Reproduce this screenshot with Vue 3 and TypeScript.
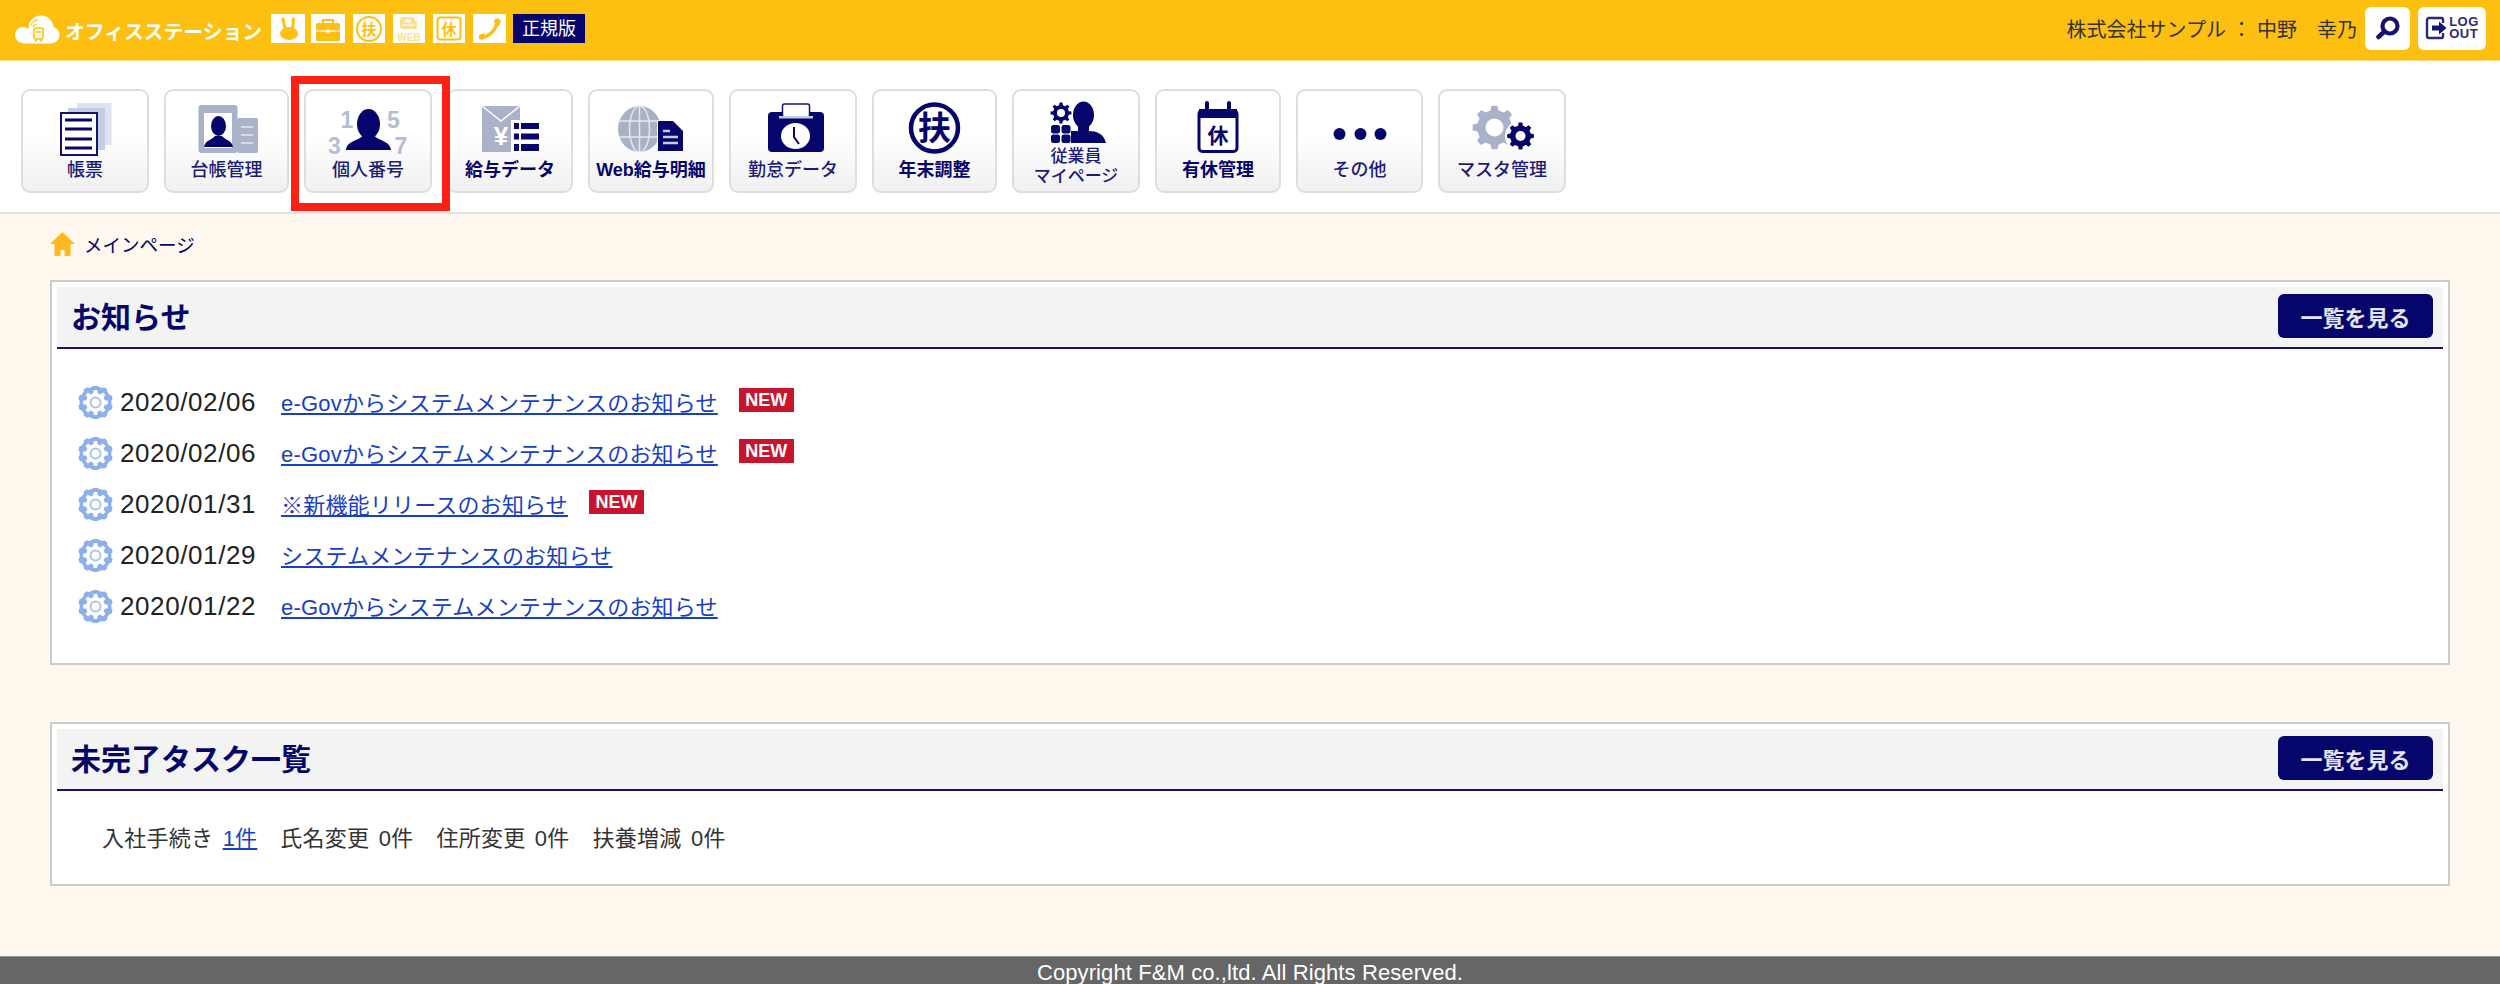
<template>
  <div class="page">
    <!-- 上部バー -->
    <header class="topbar">
      <div class="brand">
        <svg class="logo" width="46" height="30" viewBox="0 0 46 30">
          <circle cx="9" cy="20" r="8" fill="#fff" />
          <circle cx="27" cy="13" r="12.5" fill="#fff" />
          <circle cx="37" cy="20" r="8.5" fill="#fff" />
          <rect x="9" y="18" width="28" height="10.5" fill="#fff" />
          <rect x="20" y="13" width="9" height="11" rx="2" fill="none" stroke="#fec010" stroke-width="1.6" />
          <path d="M21 27l2-3M28 27l-2-3M22 17h5" stroke="#fec010" stroke-width="1.4" fill="none" />
          <path d="M17 10a9 9 0 0 1 7-5M19 12a5 5 0 0 1 4-3" stroke="#fec010" stroke-width="1.2" fill="none" />
        </svg>
        <span class="brand-name">オフィスステーション</span>
      </div>
      <div class="app-icons">
        <span class="app-icon w34">
          <svg width="34" height="29" viewBox="0 0 34 29">
            <ellipse cx="18" cy="19.5" rx="9" ry="6.5" fill="#fec010" />
            <path d="M14 15L12 5M21.5 15L22.5 5" stroke="#fec010" stroke-width="3" stroke-linecap="round" />
          </svg>
        </span>
        <span class="app-icon w34">
          <svg width="34" height="29" viewBox="0 0 34 29">
            <path d="M12 10V6h10v4" fill="none" stroke="#fec010" stroke-width="2" />
            <rect x="5" y="9" width="24" height="18" rx="1.5" fill="#fec010" />
            <path d="M5 17h24" stroke="#fff" stroke-width="1.2" />
            <rect x="15" y="15.5" width="4" height="3" fill="#fff" />
          </svg>
        </span>
        <span class="app-icon w32">
          <svg width="32" height="29" viewBox="0 0 32 29">
            <circle cx="16" cy="15" r="12" fill="none" stroke="#fec010" stroke-width="2" />
            <text x="16" y="20.5" class="glyph" font-size="15" fill="#fec010">扶</text>
          </svg>
        </span>
        <span class="app-icon w32">
          <svg width="32" height="29" viewBox="0 0 32 29">
            <path d="M9 3h10a3 3 0 0 1 3 3v1h2v8H10a3 3 0 0 1-3-3V7a3 3 0 0 1 2-4z" fill="#fddf92" />
            <rect x="12" y="5.5" width="6" height="3" rx="1" fill="#fff" />
            <path d="M9 11h13" stroke="#fff" stroke-width="1.2" />
            <text x="16" y="26.5" class="glyph latin" font-size="10" fill="#fddf92">WEB</text>
          </svg>
        </span>
        <span class="app-icon w32">
          <svg width="32" height="29" viewBox="0 0 32 29">
            <rect x="4.5" y="3.5" width="23" height="22" rx="3" fill="none" stroke="#fec010" stroke-width="2" />
            <text x="16" y="20.5" class="glyph" font-size="15" fill="#fec010">休</text>
          </svg>
        </span>
        <span class="app-icon w33">
          <svg width="33" height="29" viewBox="0 0 33 29">
            <path d="M24 8C23 16 16 23 9 23" fill="none" stroke="#fec010" stroke-width="3.5" />
            <path d="M21 6l4-2 3 3-2 5-4-1zM6 21l5-2 2 4-4 3-3-1z" fill="#fec010" />
          </svg>
        </span>
        <span class="edition">正規版</span>
      </div>
      <div class="user-area">
        <span class="user-name">株式会社サンプル ： 中野　幸乃</span>
        <button class="tool-btn search-btn" type="button">
          <svg width="28" height="24" viewBox="0 0 28 24">
            <circle cx="16" cy="10" r="7.5" fill="none" stroke="#14146e" stroke-width="4.2" />
            <path d="M10.5 15.5L4.5 21" stroke="#14146e" stroke-width="4.5" stroke-linecap="round" />
          </svg>
        </button>
        <button class="tool-btn logout-btn" type="button">
          <svg width="22" height="24" viewBox="0 0 22 24">
            <path d="M18 7V3.5A1.5 1.5 0 0 0 16.5 2H4a2 2 0 0 0-2 2v16a2 2 0 0 0 2 2h12.5a1.5 1.5 0 0 0 1.5-1.5V17" fill="none" stroke="#2a2a78" stroke-width="2.4" />
            <path d="M7 9.5h7V5.5l7.5 6.5-7.5 6.5v-4H7z" fill="#14146e" />
          </svg>
          <span class="logout-text">LOG<br />OUT</span>
        </button>
      </div>
    </header>

    <!-- メニュータブ -->
    <nav class="tabs">
      <a
        v-for="tab in tabs"
        :key="tab.id"
        :class="['tab', { 'tab-two': tab.two, 'tab-active': tab.id === 'number' }]"
        :style="{ width: tab.width + 'px' }"
      >
        <svg class="tab-icon" :width="70" :height="tab.two ? 46 : 56" :viewBox="tab.two ? '0 0 70 46' : '0 0 70 56'">
          <template v-if="tab.id === 'forms'">
            <rect x="27" y="3" width="34.5" height="42" fill="#dfe3ef" />
            <rect x="18" y="8" width="37" height="42" fill="#c5cde2" />
            <rect x="11" y="13" width="36" height="42" fill="#fff" stroke="#14146e" stroke-width="2" />
            <path d="M15 20h27M15 29h27M15 39h27M15 48h27" stroke="#05056b" stroke-width="3" />
          </template>
          <template v-else-if="tab.id === 'ledger'">
            <rect x="6.5" y="5" width="39" height="48" rx="3" fill="#a9b2c8" />
            <rect x="45" y="18" width="21" height="35" rx="2" fill="#a9b2c8" />
            <rect x="12" y="13" width="28" height="35" fill="#fff" />
            <ellipse cx="26.5" cy="26" rx="7.5" ry="10" fill="#05056b" />
            <path d="M12 47c1-7 8-7 11-11h7c3 4 10 4 11 11z" fill="#05056b" />
            <path d="M49 27h12M49 35h12M49 43h12" stroke="#d6dbe7" stroke-width="2" />
          </template>
          <template v-else-if="tab.id === 'number'">
            <text x="14" y="28" class="digit" font-size="23">1</text>
            <text x="60.5" y="28" class="digit" font-size="23">5</text>
            <text x="1.5" y="54" class="digit" font-size="23">3</text>
            <text x="68" y="54" class="digit" font-size="23">7</text>
            <ellipse cx="35.5" cy="24" rx="11.5" ry="15" fill="#05056b" />
            <path d="M13 50c1-10 14-9 17-15h11c3 6 16 5 17 15z" fill="#05056b" />
          </template>
          <template v-else-if="tab.id === 'salary'">
            <rect x="7" y="6" width="38" height="46" fill="#a9b2c8" />
            <path d="M7 6l19 15L45 6" fill="none" stroke="#fff" stroke-width="1.5" />
            <text x="26" y="45" class="glyph latin" font-size="26" fill="#fff">¥</text>
            <rect x="36" y="20" width="29" height="33" fill="#fff" />
            <path d="M39 23h5v6h-5zM39 33.5h5v6h-5zM39 44h5v7h-5z" fill="#05056b" />
            <path d="M46 23h18v6H46zM46 33.5h18v6H46zM46 44h18v7H46z" fill="#05056b" />
          </template>
          <template v-else-if="tab.id === 'web'">
            <ellipse cx="23.5" cy="29" rx="21.5" ry="23" fill="#a9b2c4" />
            <ellipse cx="23.5" cy="29" rx="10" ry="23" fill="none" stroke="#e4e7ee" stroke-width="1.5" />
            <path d="M23.5 6v46M3 21h41M3 37h41" stroke="#e4e7ee" stroke-width="1.5" />
            <path d="M41 20h16l11 11v21H41z" fill="#fff" />
            <path d="M42 21h15l10 10v20H42z" fill="#05056b" />
            <path d="M47 31h7M47 37h15M47 43h15" stroke="#c8cce0" stroke-width="2.5" />
          </template>
          <template v-else-if="tab.id === 'attendance'">
            <rect x="10" y="12" width="56" height="40" rx="4" fill="#05056b" />
            <rect x="24.5" y="4" width="27" height="13" rx="2" fill="#fff" stroke="#14146e" stroke-width="1.5" />
            <rect x="21" y="16" width="34" height="2.5" fill="#c5cbe0" />
            <ellipse cx="37.5" cy="36" rx="14.5" ry="13" fill="#fff" />
            <path d="M36 27v10l5 7" fill="none" stroke="#05056b" stroke-width="2" />
          </template>
          <template v-else-if="tab.id === 'adjust'">
            <circle cx="34.5" cy="28" r="23.5" fill="none" stroke="#05056b" stroke-width="4.5" />
            <text x="34.5" y="40" class="glyph" font-size="33" fill="#05056b">扶</text>
          </template>
          <template v-else-if="tab.id === 'mypage'">
            <path :d="gearPath(20, 13, 10.5, 8, 8)" fill="#05056b" />
            <circle cx="20" cy="13" r="4" fill="#fff" />
            <rect x="10" y="25" width="9" height="8.5" rx="2.5" fill="#05056b" />
            <rect x="20.5" y="25" width="9" height="8.5" rx="2.5" fill="#05056b" />
            <rect x="10" y="34.5" width="9" height="8.5" rx="2.5" fill="#05056b" />
            <rect x="20.5" y="34.5" width="9" height="8.5" rx="2.5" fill="#05056b" />
            <ellipse cx="42.5" cy="15" rx="10.5" ry="13.5" fill="#05056b" />
            <path d="M30 43V31h7l0-5h11v5c8 0 15 3 17 12z" fill="#05056b" />
          </template>
          <template v-else-if="tab.id === 'leave'">
            <rect x="16" y="10.5" width="38" height="41" rx="3.5" fill="#fff" stroke="#05056b" stroke-width="3" />
            <path d="M16 9h38v9H16z" fill="#05056b" />
            <path d="M24 3v7M46 3v7" stroke="#05056b" stroke-width="4" stroke-linecap="round" />
            <text x="35" y="43" class="glyph" font-size="21" fill="#05056b">休</text>
          </template>
          <template v-else-if="tab.id === 'other'">
            <circle cx="14.5" cy="34" r="6" fill="#05056b" />
            <circle cx="35.5" cy="34" r="6" fill="#05056b" />
            <circle cx="55.5" cy="34" r="6" fill="#05056b" />
          </template>
          <template v-else-if="tab.id === 'master'">
            <path :d="gearPath(27.5, 27.5, 22, 17.5, 8)" fill="#a9b2c8" />
            <circle cx="27.5" cy="27.5" r="9" fill="#fff" />
            <circle cx="53.5" cy="36" r="15.5" fill="#fff" />
            <path :d="gearPath(53.5, 36, 13.5, 10.5, 8)" fill="#05056b" />
            <circle cx="53.5" cy="36" r="5" fill="#fff" />
          </template>
        </svg>
        <span class="tab-label" :class="{ strong: tab.strong }">
          <template v-for="(line, i) in tab.label" :key="i"><br v-if="i > 0" />{{ line }}</template>
        </span>
        <span v-if="tab.id === 'number'" class="tab-highlight"></span>
      </a>
    </nav>

    <main class="main">
      <div class="breadcrumb">
        <svg width="25" height="24" viewBox="0 0 25 24">
          <path d="M12.5 0L25 12h-4.500v12h-6v-6h-4v6h-6V12H0z" fill="#fdb91f" />
        </svg>
        <span>メインページ</span>
      </div>

      <!-- お知らせ -->
      <section class="panel">
        <div class="panel-head">
          <h2>お知らせ</h2>
          <button class="more-btn" type="button">一覧を見る</button>
        </div>
        <ul class="news">
          <li v-for="(item, i) in news" :key="i" class="news-row">
            <svg class="news-icon" width="35" height="33" viewBox="0 0 35 33">
              <path :d="gearPath(17.5, 16.5, 17.5, 16, 10)" fill="#8db0ec" />
              <path :d="gearPath(17.5, 16.5, 12.5, 9.5, 8)" fill="#fff" />
              <circle cx="17.5" cy="16.5" r="5" fill="none" stroke="#a9c3f0" stroke-width="2" />
            </svg>
            <span class="news-date">{{ item.date }}</span>
            <a class="link news-link">{{ item.title }}</a>
            <span v-if="item.isNew" class="new-badge">NEW</span>
          </li>
        </ul>
      </section>

      <!-- 未完了タスク -->
      <section class="panel panel-task">
        <div class="panel-head">
          <h2>未完了タスク一覧</h2>
          <button class="more-btn" type="button">一覧を見る</button>
        </div>
        <div class="tasks">
          <span v-for="task in tasks" :key="task.name" class="task">
            {{ task.name }} <a v-if="task.count > 0" class="link">{{ task.count }}件</a><template v-else>{{ task.count }}件</template>
          </span>
        </div>
      </section>
    </main>

    <footer class="footer">Copyright F&amp;M co.,ltd. All Rights Reserved.</footer>
  </div>
</template>

<script setup lang="ts">
interface Tab {
  id: string
  label: string[]
  width: number
  strong?: boolean
  two?: boolean
}

interface News {
  date: string
  title: string
  isNew: boolean
}

const tabs: Tab[] = [
  { id: 'forms', label: ['帳票'], width: 128 },
  { id: 'ledger', label: ['台帳管理'], width: 125 },
  { id: 'number', label: ['個人番号'], width: 128 },
  { id: 'salary', label: ['給与データ'], width: 126, strong: true },
  { id: 'web', label: ['Web給与明細'], width: 126, strong: true },
  { id: 'attendance', label: ['勤怠データ'], width: 128 },
  { id: 'adjust', label: ['年末調整'], width: 125, strong: true },
  { id: 'mypage', label: ['従業員', 'マイページ'], width: 128, two: true },
  { id: 'leave', label: ['有休管理'], width: 126, strong: true },
  { id: 'other', label: ['その他'], width: 127 },
  { id: 'master', label: ['マスタ管理'], width: 128 }
]

const news: News[] = [
  { date: '2020/02/06', title: 'e-Govからシステムメンテナンスのお知らせ', isNew: true },
  { date: '2020/02/06', title: 'e-Govからシステムメンテナンスのお知らせ', isNew: true },
  { date: '2020/01/31', title: '※新機能リリースのお知らせ', isNew: true },
  { date: '2020/01/29', title: 'システムメンテナンスのお知らせ', isNew: false },
  { date: '2020/01/22', title: 'e-Govからシステムメンテナンスのお知らせ', isNew: false }
]

const tasks = [
  { name: '入社手続き', count: 1 },
  { name: '氏名変更', count: 0 },
  { name: '住所変更', count: 0 },
  { name: '扶養増減', count: 0 }
]

// 歯車のパスを作る
function gearPath(cx: number, cy: number, outer: number, inner: number, teeth: number): string {
  const step = (Math.PI * 2) / teeth
  const pts: string[] = []
  for (let i = 0; i < teeth; i++) {
    const a = i * step - Math.PI / 2
    const list: [number, number][] = [
      [a - step * 0.3, inner],
      [a - step * 0.17, outer],
      [a + step * 0.17, outer],
      [a + step * 0.3, inner]
    ]
    for (const [ang, r] of list) {
      pts.push(`${(cx + Math.cos(ang) * r).toFixed(2)} ${(cy + Math.sin(ang) * r).toFixed(2)}`)
    }
  }
  return `M${pts.join('L')}Z`
}
</script>

<style>
html,
body {
  margin: 0;
  background: #fff8ef;
  overflow: hidden;
}
</style>

<style scoped>
.page {
  display: flex;
  flex-direction: column;
  height: 984px;
  overflow: hidden;
  font-family: "Liberation Sans", "Noto Sans CJK JP", sans-serif;
  color: #222;
}

/* 上部バー */
.topbar {
  display: flex;
  align-items: flex-start;
  flex: none;
  height: 60px;
  border-bottom: 1px solid #fdd98a;
  background: #fec010;
}

.brand {
  display: flex;
  align-items: center;
  gap: 5px;
  height: 60px;
  padding-left: 14px;
}

.logo {
  margin-top: -1px;
}

.brand-name {
  font-size: 19.8px;
  font-weight: 700;
  color: #fff;
  white-space: nowrap;
}

.app-icons {
  display: flex;
  gap: 8px;
  margin: 14px 0 0 9px;
}

.app-icon {
  display: block;
  height: 29px;
  background: #fff;
}

.app-icon:first-child {
  margin-right: -2px;
}

.app-icon svg {
  display: block;
}

.w32 {
  width: 32px;
}

.w33 {
  width: 33px;
}

.w34 {
  width: 34px;
}

.glyph {
  font-family: "Noto Sans CJK JP", sans-serif;
  font-weight: 700;
  text-anchor: middle;
}

.latin {
  font-family: "Liberation Sans", sans-serif;
}

.digit {
  font-family: "Liberation Sans", sans-serif;
  font-weight: 700;
  fill: #b5bed2;
  text-anchor: middle;
}

.edition {
  width: 72px;
  height: 29px;
  margin-left: -1px;
  font-size: 18px;
  line-height: 30px;
  text-align: center;
  color: #fff;
  background: #05056b;
}

.user-area {
  display: flex;
  align-items: center;
  gap: 8px;
  height: 60px;
  margin-top: -2px;
  margin-left: auto;
  padding-right: 14px;
}

.user-name {
  font-size: 20px;
  color: #333;
  white-space: nowrap;
}

.tool-btn {
  display: flex;
  align-items: center;
  justify-content: center;
  height: 43px;
  padding: 0;
  border: 0;
  border-radius: 6px;
  background: #fff;
}

.search-btn {
  width: 45px;
}

.logout-btn {
  gap: 2px;
  width: 68px;
}

.logout-text {
  font-size: 13px;
  font-weight: 700;
  line-height: 12px;
  letter-spacing: 0.5px;
  text-align: left;
  color: #2a2a78;
}

/* メニュータブ */
.tabs {
  display: flex;
  align-items: flex-start;
  flex: none;
  gap: 15px;
  height: 123px;
  padding: 28px 0 0 21px;
  border-bottom: 2px solid #e2e2e2;
  background: #fff;
}

.tab {
  position: relative;
  display: flex;
  flex-direction: column;
  align-items: center;
  flex: none;
  box-sizing: border-box;
  height: 104px;
  padding-top: 9px;
  border: 2px solid #dedede;
  border-radius: 9px;
  background: linear-gradient(180deg, #fff 0%, #fff 45%, #f0f0f0 100%);
}

.tab-icon {
  flex: none;
  overflow: visible;
}

.tab-label {
  margin-top: 4px;
  font-size: 18px;
  font-weight: 500;
  line-height: 20px;
  text-align: center;
  color: #1c1c78;
  white-space: nowrap;
}

.tab-label.strong {
  font-weight: 700;
  color: #05056b;
}

.tab-two .tab-label {
  margin-top: 1px;
  font-size: 17px;
}

/* 赤枠（注目箇所） */
.tab-highlight {
  position: absolute;
  top: -15px;
  right: -20px;
  bottom: -20px;
  left: -15px;
  z-index: 2;
  border: 8px solid #ff2015;
  pointer-events: none;
}

/* メイン */
.main {
  display: flex;
  flex: 1;
  flex-direction: column;
  min-height: 0;
  padding: 17px 50px 0;
  background: #fff8ef;
}

.breadcrumb {
  display: flex;
  align-items: center;
  gap: 9px;
  height: 25px;
  margin-bottom: 24px;
  font-size: 18.5px;
  color: #05056b;
}

.panel {
  box-sizing: border-box;
  padding: 5px;
  border: 2px solid #ccc;
  background: #fff;
}

.panel-task {
  margin-top: 57px;
}

.panel-head {
  display: flex;
  align-items: center;
  justify-content: space-between;
  box-sizing: border-box;
  height: 62px;
  padding: 0 10px 2px 14px;
  border-bottom: 2px solid #14146e;
  background: #f3f3f3;
}

.panel-head h2 {
  margin: -3px 0 0;
  font-size: 30px;
  font-weight: 700;
  color: #05056b;
}

.more-btn {
  width: 155px;
  height: 44px;
  padding: 0;
  border: 0;
  border-radius: 6px;
  font-family: inherit;
  font-size: 22px;
  font-weight: 700;
  color: #e3e3f2;
  background: #05056b;
}

.news {
  margin: 0;
  padding: 28px 0 26px 21px;
  list-style: none;
}

.news-row {
  display: flex;
  align-items: center;
  height: 51px;
  font-size: 22px;
}

.news-icon {
  flex: none;
  margin-right: 7px;
}

.news-date {
  flex: none;
  width: 161px;
  font-size: 26px;
  letter-spacing: 0.6px;
  color: #222;
}

.link {
  color: #1a3fc4;
  letter-spacing: 0.2px;
  text-decoration: underline;
  cursor: pointer;
}

.news-link {
  margin-top: -4px;
}

.new-badge {
  align-self: flex-start;
  box-sizing: border-box;
  width: 55px;
  height: 24px;
  margin: 11px 0 0 21px;
  font-size: 18px;
  font-weight: 700;
  line-height: 24px;
  text-align: center;
  color: #fff;
  background: #c8152d;
}

.tasks {
  display: flex;
  gap: 23px;
  padding: 34px 0 26px 45px;
  font-size: 22px;
  line-height: 28px;
  word-spacing: 3px;
  letter-spacing: 0.25px;
  color: #333;
}

.task {
  white-space: nowrap;
}

/* フッター */
.footer {
  flex: none;
  box-sizing: border-box;
  height: 28px;
  overflow: hidden;
  border-top: 1px solid #999;
  font-size: 22px;
  line-height: 31px;
  letter-spacing: 0.1px;
  text-align: center;
  color: #fff;
  background: #666;
}
</style>
